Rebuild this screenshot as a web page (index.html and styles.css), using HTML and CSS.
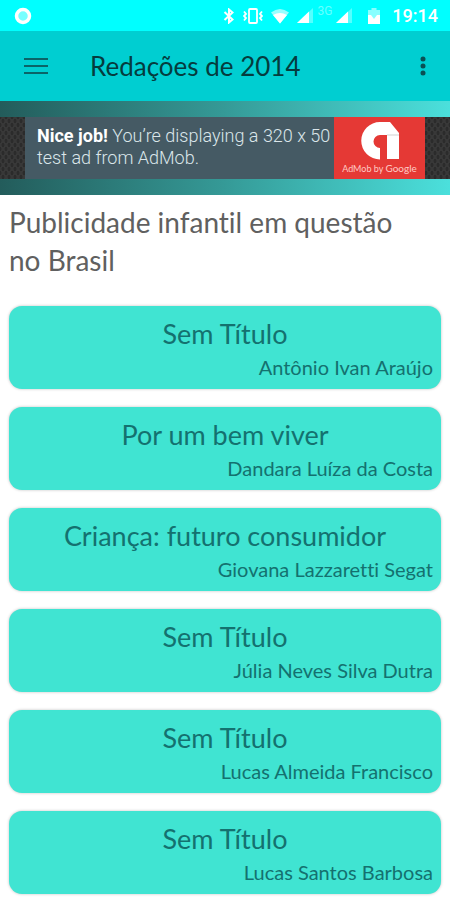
FILE: index.html
```html
<!DOCTYPE html>
<html lang="pt-BR">
<head>
  <meta charset="UTF-8" />
  <meta name="viewport" content="width=device-width, initial-scale=1.0"/>
  <title>Redações de 2014</title>
  <link rel="stylesheet" href="styles.css">
</head>
<body>
  <!-- Barra de status -->
  <div class="status">
    <svg class="gravando" width="18" height="18" viewBox="0 0 18 18">
      <circle cx="9" cy="9" r="6.5" fill="#7ff" stroke="#fff" stroke-width="3.5"/>
    </svg>
    <div class="status-icones">
      <svg width="12" height="16" viewBox="0 0 12 16" fill="none" stroke="#fff" stroke-width="2">
        <path d="M1.5 4l8 7.5L6 14.5v-13l3.5 3L1.5 12"/>
      </svg>
      <svg width="20" height="16" viewBox="0 0 20 16" fill="none" stroke="#fff" stroke-width="1.8">
        <rect x="6" y="1" width="8" height="14" rx="1"/>
        <path d="M1 3.5L3 6 1 8l2 2-2 2.5M19 3.5L17 6l2 2-2 2 2 2.5"/>
      </svg>
      <svg width="18" height="16" viewBox="0 0 18 16">
        <path d="M0 4.5Q9-2.5 18 4.5L9 15.5z" fill="#9ff"/>
        <path d="M2 7Q9 3 16 7L9 15.5z" fill="#fff"/>
      </svg>
      <svg width="16" height="16" viewBox="0 0 16 16">
        <path d="M0 15L16 0v15z" fill="#5ff"/>
        <path d="M0 15L12 3.5V15z" fill="#fff"/>
      </svg>
      <span class="rede">3G</span>
      <svg width="16" height="16" viewBox="0 0 16 16">
        <path d="M0 15L16 0v15z" fill="#5ff"/>
        <path d="M0 15L12 3.5V15z" fill="#fff"/>
      </svg>
      <svg class="bateria" width="12" height="16" viewBox="0 0 12 16">
        <path d="M0 2h3.5V0h5v2H12v14H0z" fill="#8ff"/>
        <path d="M0 7h3l3 4 3-4h3v9H0z" fill="#fff"/>
      </svg>
      <span class="hora">19:14</span>
    </div>
  </div>

  <!-- Cabeçalho -->
  <header class="barra">
    <button type="button" class="botao" aria-label="Menu">
      <svg width="24" height="18" viewBox="0 0 24 18" stroke="#0a6468" stroke-width="2">
        <path d="M0 2h24M0 9h24M0 16h24"/>
      </svg>
    </button>
    <h1>Redações de 2014</h1>
    <button type="button" class="botao opcoes" aria-label="Mais opções">
      <svg width="6" height="20" viewBox="0 0 6 20" fill="#0a5054">
        <circle cx="3" cy="3" r="2.5"/><circle cx="3" cy="10" r="2.5"/><circle cx="3" cy="17" r="2.5"/>
      </svg>
    </button>
  </header>

  <!-- Publicidade -->
  <div class="publicidade">
    <div class="faixa">
      <div class="anuncio">
        <p><b>Nice job!</b> You’re displaying a 320 x 50<br>test ad from AdMob.</p>
        <div class="admob">
          <svg width="40" height="40" viewBox="0 0 40 40">
            <path d="M20 1h10l9 11v26H27V14h-7a6.5 6.5 0 0 0 0 13v11.500A18.500 18.500 0 0 1 20 1z" fill="#fff"/>
            <path d="M27 13h12v2H27z" fill="#e8e8e8"/>
          </svg>
          <span>AdMob by <b>Google</b></span>
        </div>
      </div>
    </div>
  </div>

  <main>
    <h2>Publicidade infantil em questão no Brasil</h2>

    <div class="lista">
      <a href="#" class="cartao">
        <span class="titulo">Sem Título</span>
        <span class="autor">Antônio Ivan Araújo</span>
      </a>
      <a href="#" class="cartao">
        <span class="titulo">Por um bem viver</span>
        <span class="autor">Dandara Luíza da Costa</span>
      </a>
      <a href="#" class="cartao">
        <span class="titulo">Criança: futuro consumidor</span>
        <span class="autor">Giovana Lazzaretti Segat</span>
      </a>
      <a href="#" class="cartao">
        <span class="titulo">Sem Título</span>
        <span class="autor">Júlia Neves Silva Dutra</span>
      </a>
      <a href="#" class="cartao">
        <span class="titulo">Sem Título</span>
        <span class="autor">Lucas Almeida Francisco</span>
      </a>
      <a href="#" class="cartao">
        <span class="titulo">Sem Título</span>
        <span class="autor">Lucas Santos Barbosa</span>
      </a>
    </div>
  </main>
</body>
</html>
```

FILE: styles.css
```css
* {
  box-sizing: border-box;
}
body {
  font-family: Lato, sans-serif;
  font-variant-ligatures: none;
  margin: 0;
  background: #fff;
}
.status {
  display: flex;
  align-items: center;
  justify-content: space-between;
  height: 31px;
  padding: 0 12px 0 14px;
  background: #00ffff;
  color: white;
  font-family: Roboto, sans-serif;
}
.status svg {
  display: block;
}
.status-icones {
  display: flex;
  align-items: center;
  gap: 8px;
}
.rede {
  align-self: flex-start;
  margin: 0 -4px;
  font-size: 12px;
  line-height: 12px;
  color: #6ff;
}
.bateria {
  margin: 0 4px 0 8px;
}
.hora {
  font-size: 18px;
  font-weight: 500;
}
.barra {
  display: flex;
  align-items: center;
  height: 70px;
  padding: 0 16px;
  background: #00ced1;
}
.botao {
  display: flex;
  padding: 8px;
  border: none;
  background: none;
  cursor: pointer;
}
.opcoes {
  margin-left: auto;
}
.barra h1 {
  margin: 0 0 0 34px;
  font-size: 26px;
  font-weight: 400;
  color: #053c3e;
}
.publicidade {
  padding: 16px 0;
  background: linear-gradient(90deg, #235c5b, #359a97 50%, #4be0dc);
}
.faixa {
  background-color: #383838;
  background-image: radial-gradient(#2b2b2b 30%, transparent 40%), radial-gradient(#2b2b2b 30%, transparent 40%);
  background-size: 6px 8px;
  background-position: 0 0, 3px 4px;
  padding: 0 25px;
}
.anuncio {
  display: flex;
  height: 62px;
  background: #455a64;
}
.anuncio p {
  flex: 1;
  margin: 0;
  padding: 8px 0 0 12px;
  font-family: Roboto, sans-serif;
  font-size: 18px;
  font-weight: 300;
  line-height: 22px;
  color: #dbe6ea;
}
.anuncio p b {
  font-weight: 700;
  color: white;
}
.admob {
  display: flex;
  flex-direction: column;
  align-items: center;
  justify-content: space-between;
  width: 91px;
  padding: 4px 0;
  background: #e53935;
  color: #ffc9c4;
  font-size: 9px;
  line-height: 12px;
}
.admob b {
  font-weight: 400;
  font-size: 10px;
}
main {
  padding: 8px 9px;
}
main h2 {
  margin: 0 0 27px;
  padding-right: 32px;
  font-size: 28px;
  font-weight: 400;
  line-height: 38px;
  color: #606060;
}
.lista {
  display: flex;
  flex-direction: column;
  gap: 18px;
}
.cartao {
  display: flex;
  flex-direction: column;
  padding: 9px 8px 8px;
  border-radius: 13px;
  background: #40e4d2;
  box-shadow: 0 0 3px rgba(0,0,0,0.25);
  color: #14716f;
  text-decoration: none;
}
.titulo {
  font-size: 27px;
  line-height: 38px;
  text-align: center;
}
.autor {
  font-size: 20px;
  line-height: 28px;
  text-align: right;
}
```
